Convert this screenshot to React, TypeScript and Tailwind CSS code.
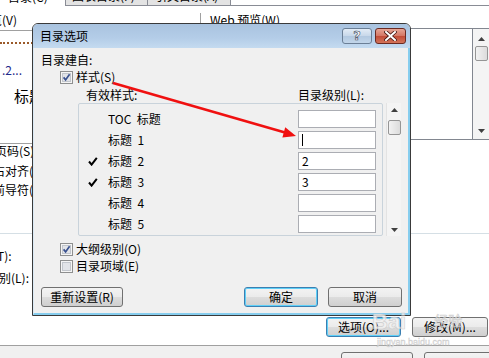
import React from "react";

function Box({ checked }: { checked: boolean }) {
  return (
    <svg width="13" height="13" viewBox="0 0 13 13" className="shrink-0">
      <rect x="0.5" y="0.5" width="12" height="12" fill="#f5f5f5" stroke="#8e8f8f" />
      <rect x="2.5" y="2.5" width="8" height="8" fill="#e2e4e8" stroke="#c2c6cc" />
      {checked && (
        <path d="M3.6 6.4 L5.6 8.9 L9.6 3.2" fill="none" stroke="#39518f" strokeWidth="1.7" />
      )}
    </svg>
  );
}

function Tick() {
  return (
    <svg width="10" height="9" viewBox="0 0 10 9">
      <path d="M1 4.5 L3.6 7.6 L8.8 0.8" fill="none" stroke="#000" strokeWidth="2" />
    </svg>
  );
}

function Up() {
  return (
    <svg width="7" height="4" viewBox="0 0 7 4">
      <path d="M0 4 L3.5 0 L7 4 Z" fill="#404040" />
    </svg>
  );
}
function Down() {
  return (
    <svg width="7" height="4" viewBox="0 0 7 4">
      <path d="M0 0 L3.5 4 L7 0 Z" fill="#404040" />
    </svg>
  );
}

const btn =
  "h-[20px] flex items-center justify-center rounded-[3px] border border-[#707070] bg-[image:linear-gradient(#f3f3f3,#ebebeb_50%,#dddddd_50%,#cfcfcf)] shrink-0";
const btnFocus =
  "h-[20px] flex items-center justify-center rounded-[3px] border border-[#3c7fb1] shadow-[inset_0_0_0_1px_#5fd0f8] bg-[image:linear-gradient(#f3f3f3,#ebebeb_50%,#dddddd_50%,#cfcfcf)] shrink-0";

const rows = [
  { label: "TOC 标题", tick: false, val: "" },
  { label: "标题 1", tick: false, val: "|" },
  { label: "标题 2", tick: true, val: "2" },
  { label: "标题 3", tick: true, val: "3" },
  { label: "标题 4", tick: false, val: "" },
  { label: "标题 5", tick: false, val: "" },
];

export default function App() {
  return (
    <div className="relative w-[489px] h-[358px] overflow-hidden bg-white text-[12px] leading-[14px] text-black font-['Noto_Sans_CJK_SC','Noto_Sans',sans-serif]">
      {/* background dialog */}
      <div className="flex flex-col h-full">
        {/* tabs */}
        <div className="h-[6px] flex shrink-0">
          <div className="w-[66px] h-[6px] bg-white border-r border-[#898c95] overflow-hidden flex items-end pl-[8px]">
            <span className="block leading-[14px] mb-[2px] whitespace-nowrap">目录(C)</span>
          </div>
          <div className="w-[82px] h-[6px] bg-[#e3e3e3] border-r border-b border-[#898c95] overflow-hidden flex items-end pl-[6px]">
            <span className="block leading-[14px] mb-[2px] whitespace-nowrap">图表目录(F)</span>
          </div>
          <div className="w-[83px] h-[6px] bg-[#e3e3e3] border-r border-b border-[#898c95] overflow-hidden flex items-end pl-[7px]">
            <span className="block leading-[14px] mb-[2px] whitespace-nowrap">引文目录(A)</span>
          </div>
          <div className="flex-1 border-b border-[#898c95]" />
        </div>

        {/* top section */}
        <div className="h-[227px] flex shrink-0">
          <div className="w-[204px] flex flex-col shrink-0">
            <div className="w-[201px] h-[17px] mt-[7px] border-r border-[#a0a0a0] whitespace-nowrap">
              <span className="block ml-[-46px] leading-[14px]">打印预览(V)</span>
            </div>
            <div className="w-[201px] h-[114px] border-t border-b border-[#a0a0a0] flex flex-col">
              <div className="mt-[11px] w-[33px] h-[2px] border-b-2 border-dotted border-[#9b5a2a]" />
              <div className="mt-[19px] ml-[2px] text-[#1f2a8a] whitespace-nowrap leading-[14px]">.2...</div>
              <div className="mt-[10px] ml-[14px] text-[15px] leading-[17px] whitespace-nowrap">标题 1</div>
            </div>
            <div className="whitespace-nowrap leading-[14px]">
              <div className="ml-[-29px]">显示页码(S)</div>
              <div className="ml-[-31px] mt-[6px]">页码右对齐(R)</div>
              <div className="ml-[-43px] mt-[5px]">制表符前导符(B):</div>
            </div>
          </div>
          <div className="flex-1 flex flex-col">
            <div className="mt-[7px] ml-[6px] h-[14px] whitespace-nowrap">Web 预览(W)</div>
            <div className="mt-[1px] h-[112px] flex border-l border-t border-b border-[#828790]">
              <div className="flex-1 bg-white border-r border-[#828790]" />
              <div className="w-[16px] bg-[#f4f4f4] flex flex-col items-center">
                <div className="mt-[8px]"><Up /></div>
                <div className="mt-[5px] w-[13px] h-[15px] rounded-[2px] border border-[#959595] bg-[image:linear-gradient(90deg,#f2f2f2,#dcdcdc)]" />
                <div className="flex-1" />
                <div className="mb-[6px]"><Down /></div>
              </div>
            </div>
          </div>
        </div>

        <div className="h-px bg-[#d5dfe5] shrink-0" />

        {/* lower section */}
        <div className="h-[111px] flex shrink-0">
          <div className="w-[326px] flex flex-col whitespace-nowrap shrink-0">
            <div className="mt-[15px] ml-[-31px]">格式(T):</div>
            <div className="mt-[8px] ml-[-37px]">显示级别(L):</div>
          </div>
          <div className="flex flex-col pt-[83px]">
            <div className="flex gap-[11px]">
              <div className={btnFocus + " w-[75px]"}>选项(O)...</div>
              <div className={btn + " w-[76px]"}>修改(M)...</div>
            </div>
          </div>
        </div>

        <div className="h-px bg-[#a0a0a0] shrink-0" />
        <div className="flex-1 bg-[#f0f0f0] flex pt-[6px] pl-[341px] gap-[11px]">
          <div className={btn + " w-[72px]"} />
          <div className={btn + " w-[70px]"} />
        </div>
      </div>

      {/* 目录选项 dialog */}
      <div className="absolute left-[32px] top-[23px] w-[379px] h-[293px] flex flex-col border border-[#3a3a3a] rounded-t-[6px] overflow-hidden">
        <div className="h-[24px] shrink-0 flex bg-[image:linear-gradient(#a9c3df,#b4cde8_60%,#c4dbf0)]">
          <div className="pl-[7px] pt-[5px] leading-[14px]">目录选项</div>
          <div className="flex-1" />
          <div className="mt-[4px] w-[30px] h-[16px] rounded-[3px] border border-[#6b7f96] bg-[image:linear-gradient(#e3ecf6,#c7d7e9_50%,#b2c8e0_50%,#c2d6ea)] flex items-center justify-center">
            <span className="text-white font-bold text-[13px] leading-[14px] font-['DejaVu_Sans',sans-serif] [-webkit-text-stroke:0.6px_#3c4a5c]">?</span>
          </div>
          <div className="mt-[4px] ml-[3px] mr-[4px] w-[31px] h-[16px] rounded-[3px] border border-[#6b2a22] bg-[image:linear-gradient(#e6a595,#d47563_50%,#c14a36_50%,#d3745a)] flex items-center justify-center">
            <svg width="13" height="10" viewBox="0 0 13 10">
              <path d="M2 1 L11 9 M11 1 L2 9" stroke="#4a1a14" strokeWidth="3.6" strokeLinecap="square" />
              <path d="M2 1 L11 9 M11 1 L2 9" stroke="#ffffff" strokeWidth="2" strokeLinecap="square" />
            </svg>
          </div>
        </div>
        <div className="flex-1 flex flex-col bg-[#f0f0f0] border-l border-l-[#dbeaf5] border-r-[2px] border-b-[2px] border-r-[#86cdee] border-b-[#86cdee]">
          <div className="mt-[5px] ml-[7px] h-[14px]">目录建自:</div>
          <div className="mt-[3px] ml-[26px] h-[14px] flex items-center gap-[3px]">
            <Box checked />
            <span>样式(S)</span>
          </div>
          <div className="mt-[4px] ml-[52px] h-[14px] flex">
            <span className="w-[212px]">有效样式:</span>
            <span>目录级别(L):</span>
          </div>
          <div className="mt-[1px] ml-[44px] h-[133px] flex">
            <div className="w-[305px] h-[133px] border border-[#c9d3db] rounded-[2px] pt-[6px] overflow-hidden">
              {rows.map((r) => (
                <div key={r.label} className="h-[21px] flex items-start">
                  <div className="w-[29px] h-[18px] pl-[9px] flex items-center">{r.tick && <Tick />}</div>
                  <div className="w-[190px] h-[18px] leading-[18px] whitespace-pre">{r.label.replace(" ", "  ")}</div>
                  <div className="w-[78px] h-[18px] border border-[#abadb3] bg-white flex items-center pl-[3px] leading-[16px]">
                    {r.val === "|" ? <div className="w-px h-[12px] bg-black" /> : r.val}
                  </div>
                </div>
              ))}
            </div>
            <div className="ml-[3px] w-[15px] h-[133px] bg-[#f4f4f4] border-l border-[#e3e3e3] flex flex-col items-center">
              <div className="mt-[5px]"><Up /></div>
              <div className="mt-[8px] w-[13px] h-[15px] rounded-[2px] border border-[#959595] bg-[image:linear-gradient(90deg,#f2f2f2,#dcdcdc)]" />
              <div className="flex-1" />
              <div className="mb-[4px]"><Down /></div>
            </div>
          </div>
          <div className="mt-[6px] ml-[26px] h-[14px] flex items-center gap-[3px]">
            <Box checked />
            <span>大纲级别(O)</span>
          </div>
          <div className="mt-[3px] ml-[26px] h-[14px] flex items-center gap-[3px]">
            <Box checked={false} />
            <span>目录项域(E)</span>
          </div>
          <div className="mt-[14px] ml-[7px] mr-[6px] flex">
            <div className={btn + " w-[82px]"}>重新设置(R)</div>
            <div className="flex-1" />
            <div className={btnFocus + " w-[74px]"}>确定</div>
            <div className={btn + " w-[74px] ml-[10px]"}>取消</div>
          </div>
        </div>
      </div>

      {/* red arrow annotation */}
      <svg className="absolute left-0 top-0 pointer-events-none" width="489" height="358" viewBox="0 0 489 358">
        <line x1="113" y1="83" x2="285" y2="132.5" stroke="#f01010" strokeWidth="2.6" />
        <polygon points="296,136 285.2,127.3 282.4,137.6" fill="#f01010" />
      </svg>

      {/* watermark */}
      <div className="absolute left-[372px] top-[310px] pointer-events-none flex items-end text-[#f2f2f2] [-webkit-text-stroke:0.6px_#c6c6c6] opacity-80">
        <span className="text-[22px] leading-[24px] font-bold font-['Liberation_Sans',sans-serif]">Bai</span>
        <span className="text-[14px] leading-[16px] ml-[28px] mb-[6px]">经验</span>
      </div>
      <div className="absolute left-[377px] top-[337px] pointer-events-none text-[9px] leading-[10px] text-[#e4e4e4] [-webkit-text-stroke:0.3px_#c8c8c8] font-['Liberation_Sans',sans-serif]">
        jingyan.baidu.com
      </div>
    </div>
  );
}
